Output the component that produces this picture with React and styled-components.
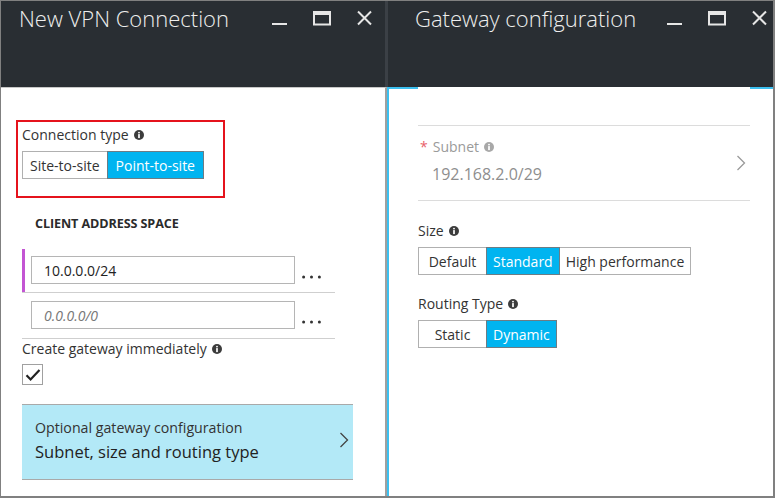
import React from 'react';
import styled, { createGlobalStyle } from 'styled-components';

const GlobalStyle = createGlobalStyle`
  html, body { margin: 0; padding: 0; background: #fff; }
  body { font-family: "Open Sans", "Noto Sans", sans-serif; color: #333; }
  * { box-sizing: border-box; }
`;

const Window = styled.div`
  width: 775px;
  height: 498px;
  border: 1px solid #808080;
  border-right-width: 2px;
  border-bottom-width: 2px;
  display: flex;
  overflow: hidden;
  background: #fff;
`;

const Blade = styled.section`
  display: flex;
  flex-direction: column;
  flex: none;
  width: ${p => p.$width}px;
`;

const Header = styled.header`
  height: 86px;
  flex: none;
  background: #292e33;
  display: flex;
  align-items: flex-start;
  padding-left: ${p => p.$left}px;
  padding-right: ${p => p.$right}px;
  border-right: ${p => (p.$divR ? '2px solid #3b4046' : 'none')};
  border-left: ${p => (p.$divL ? '1px solid #3b4046' : 'none')};
`;

const Title = styled.h1`
  margin: 2px 0 0;
  font-size: 22px;
  line-height: 30px;
  font-weight: 300;
  color: #eeeeee;
  white-space: nowrap;
`;

const Controls = styled.div`
  margin-left: auto;
  margin-top: 9px;
  display: flex;
  align-items: flex-start;
  gap: ${p => p.$gap}px;
`;

const Control = styled.svg`
  display: block;
  flex: none;
`;

const LeftBody = styled.div`
  flex: 1;
  border-top: 1px solid #c8c8c8;
  border-right: 2px solid #a0a0a0;
  padding: 0 0 0 21px;
  display: flex;
  flex-direction: column;
  align-items: flex-start;
`;

const RightBody = styled.div`
  flex: 1;
  border-top: 2px solid #3cc0f0;
  border-left: 2px solid #3cc0f0;
  padding-left: 29px;
`;

const RightContent = styled.div`
  margin-top: -2px;
  width: 332px;
  background: #fff;
  padding-top: 38px;
`;

const Highlight = styled.div`
  margin: 32px 0 0 -6px;
  width: 209px;
  height: 78px;
  border: 2px solid #e5131c;
  padding: 3px 4px 0 4px;
`;

const Label = styled.div`
  display: flex;
  align-items: center;
  height: 20px;
  font-size: 14px;
  line-height: 20px;
  color: ${p => (p.$muted ? '#9a9a9a' : '#333')};
  white-space: nowrap;
  margin-top: ${p => p.$mt || 0}px;
`;

const Required = styled.span`
  color: #e8606a;
  margin-right: 5px;
  margin-left: 1px;
`;

const InfoWrap = styled.svg`
  margin-left: 5px;
  flex: none;
  display: block;
`;

const Info = ({ color = '#3c3c3c' }) => (
  <InfoWrap width="10" height="10" viewBox="0 0 10 10">
    <circle cx="5" cy="5" r="5" fill={color} />
    <circle cx="5" cy="2.6" r="0.95" fill="#fff" />
    <rect x="4.15" y="4.1" width="1.7" height="4" fill="#fff" />
  </InfoWrap>
);

const Segmented = styled.div`
  display: flex;
  margin-top: ${p => p.$mt || 6}px;
`;

const Segment = styled.div`
  height: 28px;
  min-width: 69px;
  padding: 0 ${p => p.$pad || 6}px;
  display: flex;
  align-items: center;
  justify-content: center;
  font-size: 14px;
  white-space: nowrap;
  border: 1px solid ${p => (p.$on ? '#6d7c84' : '#b0b0b0')};
  background: ${p => (p.$on ? '#00b4f0' : '#fff')};
  color: ${p => (p.$on ? '#fff' : '#333')};
  position: relative;
  z-index: ${p => (p.$on ? 1 : 0)};
  & + & { margin-left: -1px; }
`;

const SectionTitle = styled.div`
  margin: 18px 0 0 13px;
  font-size: 12.6px;
  line-height: 16px;
  font-weight: 700;
  color: #2b2b2b;
  letter-spacing: -0.1px;
`;

const AddressRow = styled.div`
  width: 313px;
  display: flex;
  align-items: flex-end;
  padding: ${p => (p.$active ? '7px 0 8px 9px' : '8px 0 9px 9px')};
  border-bottom: 1px solid #cfcfcf;
  box-shadow: ${p => (p.$active ? 'inset 3px 0 0 #c355d3' : 'none')};
  margin-top: ${p => p.$mt || 0}px;
`;

const Input = styled.input`
  width: 264px;
  height: 28px;
  border: 1px solid #b5b5b5;
  padding: 0 12px;
  font-family: inherit;
  font-size: 14px;
  color: #222;
  background: #fff;
  outline: none;
  &::placeholder {
    color: #777;
    font-style: italic;
  }
`;

const More = styled.svg`
  display: block;
  margin: 0 0 5px 7px;
`;

const Dots = () => (
  <More width="19" height="4" viewBox="0 0 19 4">
    <circle cx="1.6" cy="2" r="1.5" fill="#333" />
    <circle cx="9.5" cy="2" r="1.5" fill="#333" />
    <circle cx="17.4" cy="2" r="1.5" fill="#333" />
  </More>
);

const Checkbox = styled.div`
  width: 21px;
  height: 21px;
  border: 1px solid #a0a0a0;
  margin-top: 5px;
  display: flex;
  align-items: center;
  justify-content: center;
  background: #fff;
`;

const NavCard = styled.div`
  margin-top: 19px;
  width: 331px;
  height: 76px;
  background: #b3e9f7;
  border-top: 1px solid #a9a9a9;
  border-bottom: 1px solid #a9a9a9;
  display: flex;
  align-items: center;
  padding: 0 4px 4px 13px;
`;

const CardText = styled.div`
  flex: 1;
  display: flex;
  flex-direction: column;
`;

const CardSub = styled.div`
  font-size: 14.2px;
  line-height: 20px;
  color: #333;
`;

const CardMain = styled.div`
  font-size: 16.5px;
  line-height: 22px;
  color: #222;
  margin-top: 3px;
`;

const Chevron = ({ color = '#444', h = 16 }) => (
  <svg width="10" height={h} viewBox={`0 0 10 ${h}`} style={{ display: 'block', flex: 'none' }}>
    <path d={`M1.5 1 L8.5 ${h / 2} L1.5 ${h - 1}`} fill="none" stroke={color} strokeWidth="1.3" />
  </svg>
);

const PickerRow = styled.div`
  border-top: 1px solid #dcdcdc;
  border-bottom: 1px solid #dcdcdc;
  height: 76px;
  display: flex;
  align-items: center;
  padding: 0 4px 0 1px;
`;

const PickerText = styled.div`
  flex: 1;
  display: flex;
  flex-direction: column;
  padding-bottom: 4px;
`;

const PickerValue = styled.div`
  font-size: 16px;
  line-height: 22px;
  color: #8e8e8e;
  margin: 6px 0 0 13px;
`;

const WindowButtons = ({ gap }) => (
  <Controls $gap={gap}>
    <Control width="15" height="16" viewBox="0 0 15 16">
      <rect x="0" y="13" width="15" height="2" fill="#e6e6e6" />
    </Control>
    <Control width="18" height="16" viewBox="0 0 18 16">
      <rect x="1" y="2" width="16" height="12.5" fill="none" stroke="#e6e6e6" strokeWidth="2" />
      <rect x="0" y="1" width="18" height="4" fill="#e6e6e6" />
    </Control>
    <Control width="15" height="16" viewBox="0 0 15 16">
      <path d="M1 1.5 L14 14.5 M14 1.5 L1 14.5" stroke="#e6e6e6" strokeWidth="2" />
    </Control>
  </Controls>
);

export default function App() {
  return (
    <>
      <GlobalStyle />
      <Window>
        <Blade $width={386}>
          <Header $left={18} $right={13} $divR>
            <Title>New VPN Connection</Title>
            <WindowButtons gap={26} />
          </Header>
          <LeftBody>
            <Highlight>
              <Label>
                Connection type <Info />
              </Label>
              <Segmented>
                <Segment $pad={7}>Site-to-site</Segment>
                <Segment $on $pad={8}>Point-to-site</Segment>
              </Segmented>
            </Highlight>
            <SectionTitle>CLIENT ADDRESS SPACE</SectionTitle>
            <AddressRow $active $mt={17}>
              <Input defaultValue="10.0.0.0/24" />
              <Dots />
            </AddressRow>
            <AddressRow>
              <Input placeholder="0.0.0.0/0" />
              <Dots />
            </AddressRow>
            <Label>
              Create gateway immediately <Info />
            </Label>
            <Checkbox>
              <svg width="16" height="14" viewBox="0 0 16 14">
                <path d="M1.5 7.2 L5.6 11.4 L14.5 2" fill="none" stroke="#222" strokeWidth="2.2" />
              </svg>
            </Checkbox>
            <NavCard>
              <CardText>
                <CardSub>Optional gateway configuration</CardSub>
                <CardMain>Subnet, size and routing type</CardMain>
              </CardText>
              <Chevron color="#444" h={16} />
            </NavCard>
          </LeftBody>
        </Blade>
        <Blade $width={386}>
          <Header $left={27} $right={6} $divL>
            <Title>Gateway configuration</Title>
            <WindowButtons gap={26} />
          </Header>
          <RightBody>
            <RightContent>
              <PickerRow>
                <PickerText>
                  <Label $muted>
                    <Required>*</Required>Subnet <Info color="#a8a8a8" />
                  </Label>
                  <PickerValue>192.168.2.0/29</PickerValue>
                </PickerText>
                <Chevron color="#9a9a9a" h={16} />
              </PickerRow>
              <Label $mt={20}>
                Size <Info />
              </Label>
              <Segmented>
                <Segment>Default</Segment>
                <Segment $on>Standard</Segment>
                <Segment>High performance</Segment>
              </Segmented>
              <Label $mt={19}>
                Routing Type <Info />
              </Label>
              <Segmented>
                <Segment>Static</Segment>
                <Segment $on>Dynamic</Segment>
              </Segmented>
            </RightContent>
          </RightBody>
        </Blade>
      </Window>
    </>
  );
}
